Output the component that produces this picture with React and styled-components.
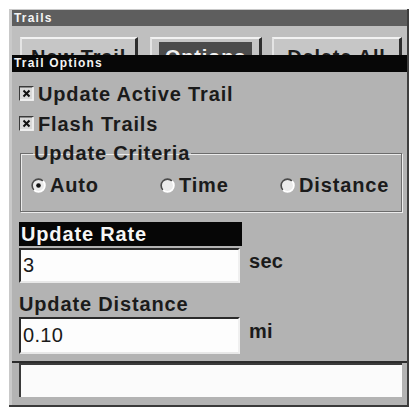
import React from "react";
import styled, { createGlobalStyle } from "styled-components";

const GlobalStyle = createGlobalStyle`
  * { box-sizing: border-box; }
  body {
    margin: 0;
    background: #fff;
    font-family: "Liberation Sans", Arial, sans-serif;
  }
`;

const Window = styled.div`
  margin: 9px 0 0 9px;
  width: 400px;
  padding: 1px 0 0 3px;
  background: #c9c9c9;
  border-right: 2px solid #3e3e3e;
  border-bottom: 2px solid #3a3a3a;
`;

const TitleBar = styled.div`
  height: ${(p) => (p.$dark ? 17 : 16)}px;
  line-height: ${(p) => (p.$dark ? 17 : 16)}px;
  padding-left: 2px;
  background: ${(p) => (p.$dark ? "#070707" : "#5e5e5e")};
  color: #f4f4f4;
  font-size: 12px;
  font-weight: 700;
  letter-spacing: 1.2px;
`;

const ButtonRow = styled.div`
  height: 29px;
  overflow: hidden;
  display: flex;
  padding: 11px 0 0 8px;
  background: #bfbfbf;
`;

const Button = styled.div`
  flex: none;
  display: flex;
  justify-content: center;
  align-items: flex-start;
  width: ${(p) => p.$w}px;
  margin-right: ${(p) => p.$gap}px;
  height: 36px;
  padding-top: 3px;
  border-top: 2px solid #f2f2f2;
  border-left: 2px solid #e4e4e4;
  border-right: 3px solid #2e2e2e;
  background: #c6c6c6;
  font-size: 20px;
  font-weight: 700;
  letter-spacing: 0.8px;
  color: #1c1c1c;
`;

const Caption = styled.span`
  display: block;
  padding: 3px 6px 0;
  line-height: 24px;
  background: ${(p) => (p.$focus ? "#4b4b4b" : "transparent")};
  color: ${(p) => (p.$focus ? "#f2f2f2" : "#1c1c1c")};
`;

const DialogBody = styled.div`
  padding: 6px 5px 7px 7px;
  background: #b3b3b3;
  border-bottom: 2px solid #2c2c2c;
  color: #1b1b1b;
  font-size: 20px;
  font-weight: 700;
  letter-spacing: 0.85px;
`;

const CheckRow = styled.div`
  display: flex;
  align-items: center;
  gap: 4px;
  height: 30px;
  line-height: 30px;
  padding-top: 1px;
`;

const Group = styled.fieldset`
  margin: 4px 0 0 1px;
  padding: 9px 0 14px 10px;
  border: 1px solid #6c6c6c;
  box-shadow: inset 1px 1px 0 #ececec, 1px 1px 0 #ececec;
  min-width: 0;
`;

const Legend = styled.legend`
  margin-left: 2px;
  padding: 0 1px;
  line-height: 22px;
  font-size: 20px;
`;

const RadioRow = styled.div`
  display: grid;
  grid-template-columns: 129px 120px auto;
  line-height: 24px;
`;

const RadioItem = styled.div`
  display: flex;
  align-items: center;
  gap: 4px;
`;

const LabelBar = styled.div`
  width: 223px;
  height: 24px;
  line-height: 24px;
  margin-top: 10px;
  padding-left: 2px;
  background: #060606;
  color: #f6f6f6;
`;

const Label = styled.div`
  margin-top: 10px;
  line-height: 22px;
`;

const FieldRow = styled.div`
  display: flex;
  align-items: flex-start;
  gap: 9px;
  margin-top: 2px;
`;

const Input = styled.div`
  width: 221px;
  height: ${(p) => p.$h}px;
  line-height: ${(p) => p.$h - 4}px;
  padding-left: 2px;
  background: #fdfdfd;
  border-top: 2px solid #2a2a2a;
  border-left: 2px solid #2a2a2a;
  border-right: 2px solid #f0f0f0;
  border-bottom: 2px solid #e8e8e8;
  font-weight: 400;
  letter-spacing: 0.3px;
  color: #1a1a1a;
`;

const Unit = styled.div`
  margin-top: ${(p) => p.$top}px;
  line-height: 24px;
  letter-spacing: 0.3px;
`;

const Status = styled.div`
  padding: 0 5px 8px 7px;
  background: #b3b3b3;
`;

const StatusBox = styled.div`
  height: 34px;
  background: #fbfbfb;
  border-top: 2px solid #3a3a3a;
  border-left: 2px solid #3a3a3a;
`;

const CheckBox = () => (
  <svg width="15" height="15" viewBox="0 0 15 15">
    <rect x="0" y="0" width="15" height="15" fill="#d9d9d9" />
    <path d="M0 14.5 V0.5 H14.5" stroke="#3a3a3a" strokeWidth="2" fill="none" />
    <path d="M1 14 H14 V1" stroke="#f4f4f4" strokeWidth="1.5" fill="none" />
    <path d="M4.5 4.5 L10.5 10.5 M10.5 4.5 L4.5 10.5" stroke="#111" strokeWidth="2" />
  </svg>
);

const Radio = ({ on }) => (
  <svg width="15" height="15" viewBox="0 0 15 15">
    <circle cx="7.5" cy="7.5" r="6.3" fill="#ebebeb" />
    <path d="M3 12 A6.3 6.3 0 0 1 12 3" stroke="#4a4a4a" strokeWidth="1.6" fill="none" />
    <path d="M12 3 A6.3 6.3 0 0 1 3 12" stroke="#ffffff" strokeWidth="1.8" fill="none" />
    {on && <circle cx="7.5" cy="7.5" r="2.3" fill="#111" />}
  </svg>
);

export default function App() {
  return (
    <>
      <GlobalStyle />
      <Window>
        <TitleBar>Trails</TitleBar>
        <ButtonRow>
          <Button $w={118} $gap={12}>
            <Caption>New Trail</Caption>
          </Button>
          <Button $w={112} $gap={10}>
            <Caption $focus>Options</Caption>
          </Button>
          <Button $w={130} $gap={0}>
            <Caption>Delete All</Caption>
          </Button>
        </ButtonRow>
        <TitleBar $dark>Trail Options</TitleBar>
        <DialogBody>
          <CheckRow>
            <CheckBox />
            Update Active Trail
          </CheckRow>
          <CheckRow>
            <CheckBox />
            Flash Trails
          </CheckRow>
          <Group>
            <Legend>Update Criteria</Legend>
            <RadioRow>
              <RadioItem>
                <Radio on />
                Auto
              </RadioItem>
              <RadioItem>
                <Radio />
                Time
              </RadioItem>
              <RadioItem>
                <Radio />
                Distance
              </RadioItem>
            </RadioRow>
          </Group>
          <LabelBar>Update Rate</LabelBar>
          <FieldRow>
            <Input $h={35}>3</Input>
            <Unit $top={1}>sec</Unit>
          </FieldRow>
          <Label>Update Distance</Label>
          <FieldRow>
            <Input $h={37}>0.10</Input>
            <Unit $top={2}>mi</Unit>
          </FieldRow>
        </DialogBody>
        <Status>
          <StatusBox />
        </Status>
      </Window>
    </>
  );
}
